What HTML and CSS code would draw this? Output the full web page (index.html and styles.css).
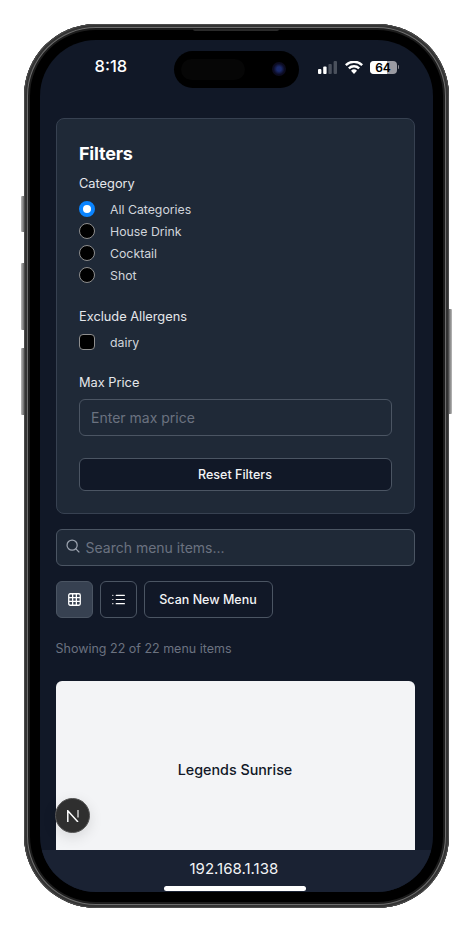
FILE: index.html
```html
<!DOCTYPE html>
<html lang="en">
<head>
<meta charset="utf-8">
<title>Menu</title>
<link rel="stylesheet" href="styles.css">
</head>
<body>
<div class="phone">
  <span class="side side-a"></span>
  <span class="side side-b"></span>
  <span class="side side-c"></span>
  <span class="side side-r"></span>
  <span class="speaker"></span>
  <div class="screen">
    <header class="status">
      <span class="time">8:18</span>
      <div class="island"><span class="island-pill"></span><span class="lens"></span></div>
      <div class="status-icons">
        <svg class="signal" width="20" height="13" viewBox="0 0 20 13"><rect x="0" y="8" width="3.4" height="5" rx="1" fill="#fff"/><rect x="5.2" y="5.5" width="3.4" height="7.5" rx="1" fill="#fff"/><rect x="10.4" y="3" width="3.4" height="10" rx="1" fill="#4a505c"/><rect x="15.6" y="0" width="3.4" height="13" rx="1" fill="#4a505c"/></svg>
        <svg class="wifi" width="18" height="13" viewBox="0 0 18 13"><path d="M9 13 6 9.700a4.400 4.400 0 0 1 6 0zM4.700 8.300 3 6.400a8.800 8.800 0 0 1 12 0l-1.700 1.900a6.200 6.200 0 0 0-8.600 0zM1.600 5 0 3.200a13 13 0 0 1 18 0L16.400 5a10.700 10.700 0 0 0-14.800 0z" fill="#fff"/></svg>
        <div class="battery"><span class="battery-fill"></span><span class="battery-num">64</span></div>
        <span class="battery-tip"></span>
      </div>
    </header>
    <main class="content">
      <section class="filters">
        <h2 class="filters-title">Filters</h2>
        <div class="group group-category">
          <div class="label">Category</div>
          <label class="option"><span class="radio radio-on"></span>All Categories</label>
          <label class="option"><span class="radio"></span>House Drink</label>
          <label class="option"><span class="radio"></span>Cocktail</label>
          <label class="option"><span class="radio"></span>Shot</label>
        </div>
        <div class="group group-allergen">
          <div class="label">Exclude Allergens</div>
          <label class="option"><span class="check"></span>dairy</label>
        </div>
        <div class="group group-price">
          <div class="label">Max Price</div>
          <div class="field">Enter max price</div>
        </div>
        <button class="reset">Reset Filters</button>
      </section>
      <div class="search">
        <svg class="search-icon" width="14" height="14" viewBox="0 0 16 16" fill="none" stroke="#9ca3af" stroke-width="1.400" stroke-linecap="round"><circle cx="7" cy="7" r="5.800"/><path d="m11.300 11.300 3.500 3.500"/></svg>
        <span>Search menu items...</span>
      </div>
      <div class="toolbar">
        <button class="tool tool-on">
          <svg width="13" height="13" viewBox="0 0 14 14" fill="none" stroke="#fff" stroke-width="1.400"><rect x="0.800" y="0.800" width="12.400" height="12.400" rx="1.500"/><path d="M1 5h12M1 9h12M5 1v12M9 1v12"/></svg>
        </button>
        <button class="tool">
          <svg width="13" height="13" viewBox="0 0 14 14" fill="none" stroke="#fff" stroke-width="1.200" stroke-linecap="round"><path d="M4.500 2.500H13.400M4.500 7H13.400M4.500 11.500H13.400M.8 2.500h.2M.8 7h.2M.8 11.500h.2"/></svg>
        </button>
        <button class="scan">Scan New Menu</button>
      </div>
      <p class="count">Showing 22 of 22 menu items</p>
      <article class="item">Legends Sunrise</article>
    </main>
    <div class="next-badge">
      <svg width="12" height="12" viewBox="0 0 12 12" fill="none" stroke-width="1.500"><path d="M.8 12V.8L11 12" stroke="#fff"/><path d="M11 0v7.500" stroke="#ccc"/></svg>
    </div>
    <footer class="urlbar">
      <span class="url">192.168.1.138</span>
      <span class="home"></span>
    </footer>
  </div>
</div>
</body>
</html>
```
FILE: styles.css
```css
* { box-sizing: border-box; }
html, body { margin: 0; height: 100%; background: #fff; overflow: hidden; }
body { font-family: Inter, "Liberation Sans", sans-serif; color: #fff; padding: 24px 0 0 24px; }
.phone {
  position: relative;
  width: 424.500px;
  height: 884px;
  padding: 16px;
  border-radius: 72px;
  background: #000;
  box-shadow: inset 0 0 0 1px #4a4a4a, inset 0 0 0 3px #333, inset 0 0 0 4px #6e6e6e, inset 0 0 0 6px #1c1c1c;
}
.side { position: absolute; width: 3px; background: linear-gradient(90deg, #bbb, #666); border-radius: 1px 0 0 1px; left: -3px; }
.side-a { top: 172px; height: 36px; }
.side-b { top: 239px; height: 67px; }
.side-c { top: 324px; height: 67px; }
.side-r { left: auto; right: -3px; top: 285px; height: 105px; border-radius: 0 1px 1px 0; background: linear-gradient(90deg, #666, #bbb); }
.speaker { position: absolute; top: 5px; left: 169px; width: 86px; height: 2px; background: #2a2a2a; border-radius: 0 0 3px 3px; }
.screen {
  position: relative;
  width: 392.700px;
  height: 852px;
  border-radius: 56px;
  background: #111827;
  overflow: hidden;
  display: flex;
  flex-direction: column;
}
.status { position: relative; flex: none; height: 78px; }
.time { position: absolute; left: 54.500px; top: 15px; font-size: 16.500px; line-height: 22px; font-weight: 500; }
.island { position: absolute; left: 134px; top: 11px; width: 125px; height: 37px; border-radius: 19px; background: #000; }
.island-pill { position: absolute; left: 7px; top: 8px; width: 64px; height: 21px; border-radius: 11px; background: #060606; }
.lens { position: absolute; left: 98px; top: 11px; width: 14px; height: 14px; border-radius: 50%; background: radial-gradient(circle, #1b2a6b 0 22%, #0c0c24 55%, #0a0a10 100%); }
.status-icons { position: absolute; left: 278px; top: 19px; width: 84px; height: 16px; display: flex; align-items: center; }
.signal { flex: none; margin-right: 7px; }
.wifi { flex: none; margin-right: 6.500px; }
.battery { position: relative; flex: none; width: 27px; height: 13px; border-radius: 4px; background: #9a9aa2; overflow: hidden; color: #000; }
.battery-fill { position: absolute; left: 0; top: 0; bottom: 0; width: 64%; background: #fff; }
.battery-num { position: relative; display: block; text-align: center; font-size: 12px; line-height: 13px; font-weight: 600; }
.battery-tip { flex: none; width: 1.500px; height: 4px; margin-left: 1px; background: #8a8a92; border-radius: 0 1px 1px 0; }
.content { flex: 1; min-height: 0; padding: 0 18.200px 0 15.500px; overflow: hidden; }
.filters {
  height: 396px;
  padding: 22px 22px 0;
  background: #1f2937;
  border: 1px solid #374151;
  border-radius: 8px;
}
.filters-title { margin: 0 0 0 .5px; font-size: 18px; line-height: 26px; font-weight: 700; letter-spacing: -0.200px; }
.group-category { margin-top: 7px; }
.group-allergen { margin-top: 21px; }
.group-price { margin-top: 20px; }
.label { margin-left: .5px; font-size: 12.800px; line-height: 20px; color: #e5e7eb; }
.group-category .label { margin-bottom: 4px; }
.group-allergen .label { margin-bottom: 4px; }
.group-price .label { margin-bottom: 6px; }
.option { display: flex; align-items: center; height: 22px; font-size: 12.300px; color: #d1d5db; }
.radio { flex: none; width: 16.500px; height: 16.500px; margin-right: 15px; border-radius: 50%; background: #000; border: 1px solid #8f8f8f; }
.radio-on { background: #fff; border: 4.500px solid #0a84ff; }
.check { flex: none; width: 16.500px; height: 16.500px; margin-right: 15px; border-radius: 4px; background: #000; border: 1px solid #8f8f8f; }
.field {
  height: 37px;
  padding: 0 11.500px;
  display: flex;
  align-items: center;
  background: #1f2937;
  border: 1px solid #4b5563;
  border-radius: 6px;
  color: #6b7280;
  font-size: 14px;
}
.reset {
  display: block;
  width: 100%;
  height: 33px;
  margin-top: 22px;
  background: #111827;
  color: #f3f4f6;
  border: 1px solid #4b5563;
  border-radius: 6px;
  font: 450 12.500px Inter, sans-serif;
}
.search {
  height: 37px;
  margin-top: 15px;
  padding: 0 9px;
  display: flex;
  align-items: center;
  gap: 6px;
  background: #1f2937;
  border: 1px solid #4b5563;
  border-radius: 6px;
  color: #6b7280;
  font-size: 14px;
}
.search-icon { flex: none; margin-top: -3px; }
.toolbar { display: flex; gap: 7px; margin-top: 15px; }
.tool {
  width: 37px;
  height: 37px;
  padding: 0;
  display: flex;
  align-items: center;
  justify-content: center;
  background: #111827;
  border: 1px solid #4b5563;
  border-radius: 6px;
}
.tool-on { background: #374151; }
.scan {
  width: 129px;
  height: 37px;
  padding: 0;
  background: #111827;
  color: #f3f4f6;
  border: 1px solid #4b5563;
  border-radius: 6px;
  font: 450 12.500px Inter, sans-serif;
}
.count { margin: 22px 0 0; font-size: 12.500px; line-height: 18px; color: #6b7280; }
.item {
  height: 220px;
  margin-top: 23px;
  padding-top: 78px;
  background: #f3f4f6;
  border-radius: 6px 6px 0 0;
  color: #111827;
  text-align: center;
  font-size: 14.300px;
  line-height: 22px;
  font-weight: 450;
}
.next-badge {
  position: absolute;
  left: 15px;
  top: 758px;
  width: 35px;
  height: 35px;
  display: flex;
  align-items: center;
  justify-content: center;
  border-radius: 50%;
  background: #2f2f2f;
  border: 1px solid #555;
  box-shadow: 0 4px 14px rgba(0, 0, 0, 0.12);
}
.urlbar {
  position: relative;
  flex: none;
  height: 42px;
  background: #1a2233;
  text-align: center;
  padding: 8px 5px 0 0;
}
.url { font-size: 15px; line-height: 20px; color: #f3f4f6; }
.home { position: absolute; left: 124px; bottom: 1px; width: 142px; height: 5px; border-radius: 3px; background: #fff; }
```
